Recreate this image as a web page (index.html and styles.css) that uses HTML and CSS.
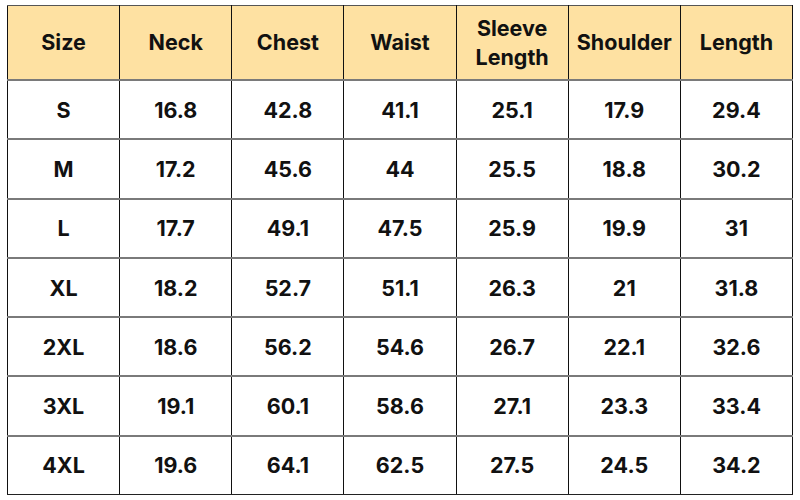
FILE: index.html
```html
<!DOCTYPE html>
<html>
<head>
<meta charset="utf-8">
<link rel="stylesheet" href="styles.css">
</head>
<body>
<table class="size-chart">
  <thead>
    <tr>
      <th>Size</th><th>Neck</th><th>Chest</th><th>Waist</th><th>Sleeve<br>Length</th><th>Shoulder</th><th>Length</th>
    </tr>
  </thead>
  <tbody>
    <tr><td>S</td><td>16.8</td><td>42.8</td><td>41.1</td><td>25.1</td><td>17.9</td><td>29.4</td></tr>
    <tr><td>M</td><td>17.2</td><td>45.6</td><td>44</td><td>25.5</td><td>18.8</td><td>30.2</td></tr>
    <tr><td>L</td><td>17.7</td><td>49.1</td><td>47.5</td><td>25.9</td><td>19.9</td><td>31</td></tr>
    <tr><td>XL</td><td>18.2</td><td>52.7</td><td>51.1</td><td>26.3</td><td>21</td><td>31.8</td></tr>
    <tr><td>2XL</td><td>18.6</td><td>56.2</td><td>54.6</td><td>26.7</td><td>22.1</td><td>32.6</td></tr>
    <tr><td>3XL</td><td>19.1</td><td>60.1</td><td>58.6</td><td>27.1</td><td>23.3</td><td>33.4</td></tr>
    <tr><td>4XL</td><td>19.6</td><td>64.1</td><td>62.5</td><td>27.5</td><td>24.5</td><td>34.2</td></tr>
  </tbody>
</table>
</body>
</html>
```
FILE: styles.css
```css
html, body {
  margin: 0;
  padding: 0;
  background: #ffffff;
}
body {
  padding: 5px 7px;
  font-family: Inter, "Liberation Sans", sans-serif;
  color: #111111;
}
.size-chart {
  width: 786px;
  border-collapse: collapse;
  table-layout: fixed;
}
.size-chart th,
.size-chart td {
  border-left: 1px solid #111111;
  border-right: 1px solid #111111;
  border-top: 2px solid #7a7a7a;
  border-bottom: 2px solid #7a7a7a;
  text-align: center;
  vertical-align: middle;
  padding: 0;
  font-weight: 700;
  font-size: 21.5px;
}
.size-chart th {
  background: #fee1a2;
  height: 73px;
  line-height: 29px;
}
.size-chart td {
  height: 57.3px;
  background: #ffffff;
}
.size-chart thead th {
  border-top: 1px solid #555555;
}
.size-chart tbody tr:last-child td {
  border-bottom: 1.5px solid #222222;
}
```
